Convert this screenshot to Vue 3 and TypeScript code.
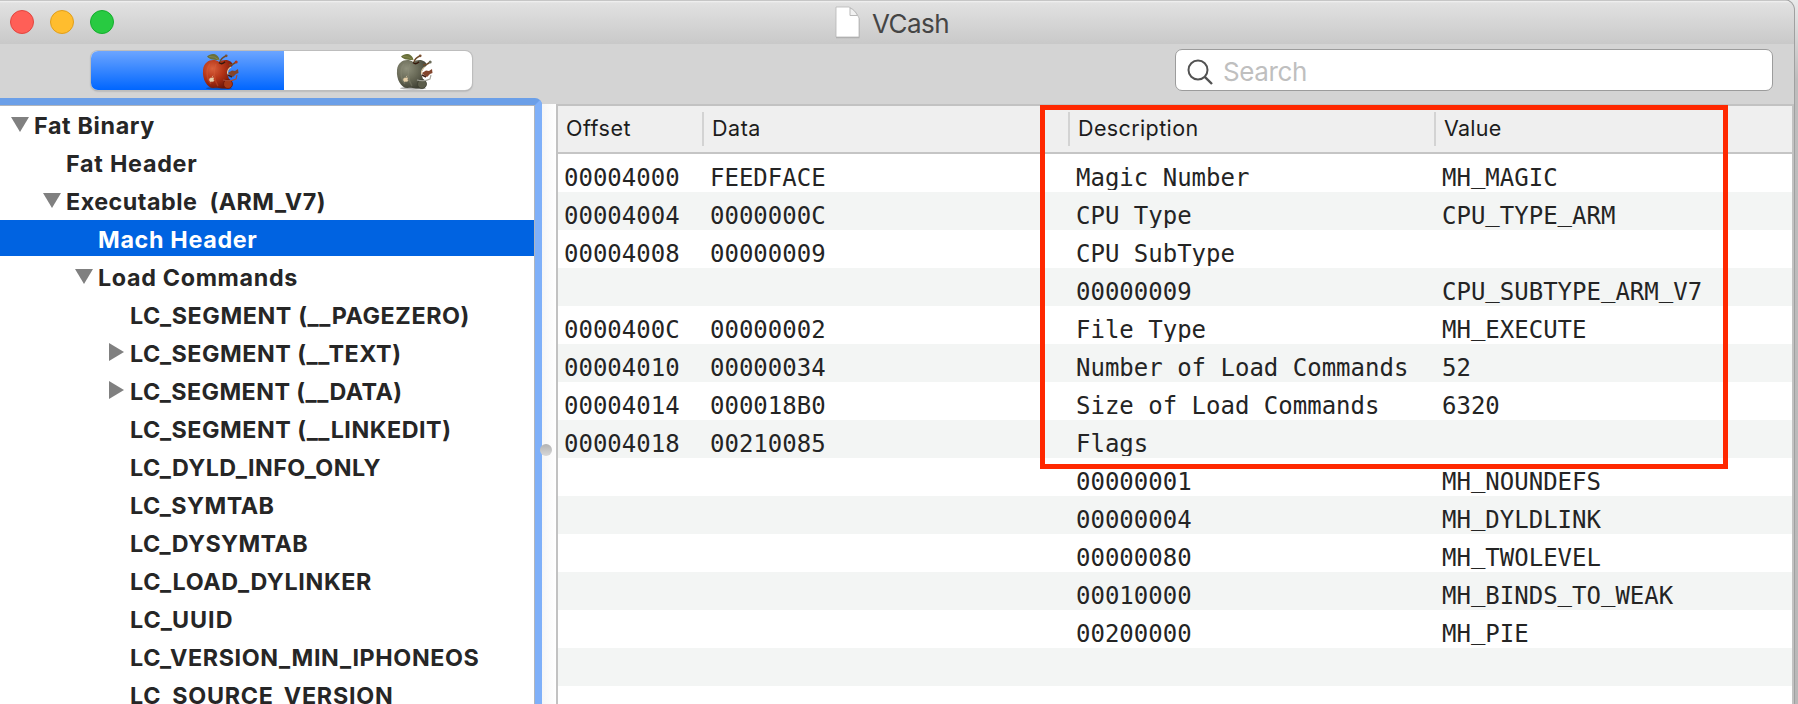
<script setup lang="ts">
interface TreeItem {
  label: string
  level: number
  width: number
  state?: 'open' | 'closed'
  selected?: boolean
}

const tree: TreeItem[] = [
  { label: 'Fat Binary', level: 0, width: 121, state: 'open' },
  { label: 'Fat Header', level: 1, width: 131.5 },
  { label: 'Executable  (ARM_V7)', level: 1, width: 260, state: 'open' },
  { label: 'Mach Header', level: 2, width: 159.5, selected: true },
  { label: 'Load Commands', level: 2, width: 200, state: 'open' },
  { label: 'LC_SEGMENT (__PAGEZERO)', level: 3, width: 340 },
  { label: 'LC_SEGMENT (__TEXT)', level: 3, width: 271.5, state: 'closed' },
  { label: 'LC_SEGMENT (__DATA)', level: 3, width: 272.5, state: 'closed' },
  { label: 'LC_SEGMENT (__LINKEDIT)', level: 3, width: 321.5 },
  { label: 'LC_DYLD_INFO_ONLY', level: 3, width: 251 },
  { label: 'LC_SYMTAB', level: 3, width: 144.5 },
  { label: 'LC_DYSYMTAB', level: 3, width: 178 },
  { label: 'LC_LOAD_DYLINKER', level: 3, width: 242 },
  { label: 'LC_UUID', level: 3, width: 103.5 },
  { label: 'LC_VERSION_MIN_IPHONEOS', level: 3, width: 349.5 },
  { label: 'LC_SOURCE_VERSION', level: 3, width: 263.5 },
]

const columns = [
  { name: 'Offset', width: 65 },
  { name: 'Data', width: 49 },
  { name: 'Description', width: 120.5 },
  { name: 'Value', width: 57.5 },
]

const rows: string[][] = [
  ['00004000', 'FEEDFACE', 'Magic Number', 'MH_MAGIC'],
  ['00004004', '0000000C', 'CPU Type', 'CPU_TYPE_ARM'],
  ['00004008', '00000009', 'CPU SubType', ''],
  ['', '', '00000009', 'CPU_SUBTYPE_ARM_V7'],
  ['0000400C', '00000002', 'File Type', 'MH_EXECUTE'],
  ['00004010', '00000034', 'Number of Load Commands', '52'],
  ['00004014', '000018B0', 'Size of Load Commands', '6320'],
  ['00004018', '00210085', 'Flags', ''],
  ['', '', '00000001', 'MH_NOUNDEFS'],
  ['', '', '00000004', 'MH_DYLDLINK'],
  ['', '', '00000080', 'MH_TWOLEVEL'],
  ['', '', '00010000', 'MH_BINDS_TO_WEAK'],
  ['', '', '00200000', 'MH_PIE'],
  ['', '', '', ''],
  ['', '', '', ''],
]

// Splits a constant's name so that its underscores can sit nearer the baseline.
const pieces = (cell: string) => cell.split(/(_)/)

const apples = [
  { id: 'red', light: '#d9603c', mid: '#b33417', dark: '#6e1608', core: '#a83a18' },
  { id: 'grey', light: '#8f907c', mid: '#6a6b58', dark: '#3f4034', core: '#5c5d4b' },
]

// Tracks a label in or out so that it spans the given width in pixels.
const vFit = {
  mounted(el: HTMLElement, binding: { value: number }) {
    const natural = el.getBoundingClientRect().width
    const count = (el.textContent ?? '').length
    el.style.letterSpacing = `${((binding.value - natural) / count).toFixed(3)}px`
  },
}
</script>

<template>
  <div class="desktop">
    <div class="window">
      <header class="titlebar">
        <div class="lights">
          <span class="light close"></span>
          <span class="light minimize"></span>
          <span class="light zoom"></span>
        </div>
        <div class="title">
          <svg class="doc" width="26" height="34" viewBox="0 0 26 34">
            <path d="M1 1.5H13.5L24.5 12V31.5H1Z" fill="#999" opacity=".6" transform="translate(0 .8)" />
            <path d="M1 1H14C18 3 22 7 24 12V31H1Z" fill="#fff" stroke="#b5b5b5" stroke-width=".8" />
            <path d="M15 2V9.5H22.5C21 6 18 3 15 2Z" fill="#f2f2f2" stroke="#b9b9b9" stroke-width="1" />
          </svg>
          <span v-fit="77">VCash</span>
        </div>
      </header>

      <div class="toolbar">
        <div class="segments">
          <div v-for="a in apples" :key="a.id" class="segment" :class="a.id">
            <svg width="38" height="38" viewBox="0 0 38 38">
              <defs>
                <radialGradient :id="'skin-' + a.id" cx=".32" cy=".3" r=".75">
                  <stop offset="0" :stop-color="a.light" />
                  <stop offset=".5" :stop-color="a.mid" />
                  <stop offset="1" :stop-color="a.dark" />
                </radialGradient>
              </defs>
              <ellipse cx="17" cy="35.2" rx="13" ry="1.5" fill="#222" opacity=".35" />
              <path d="M17 9C12 5 2 7 1 17C0 27 6 36 12 35C15 34.5 17 35.5 20 35.5C26 36 31 34 30 30C29 27 28 27 27 26L25 20L28 15L31 12C29 6 21 6 17 9Z" :fill="`url(#skin-${a.id})`" />
              <path d="M8 11C4 16 4 25 9 31M14 11C11 18 12 27 16 33" fill="none" :stroke="a.light" stroke-width="1.5" opacity=".35" />
              <path d="M17 9.5Q20 12 23 8.8" fill="none" stroke="#34180b" stroke-width="1.5" />
              <path d="M29 14Q25.500 16 25.500 20L28 23" fill="none" stroke="#e2cfaa" stroke-width="1.1" />
              <path d="M26 20L30 17.500L33 18L36 16L36.500 20L34 21L31 24L28 22Z" fill="#83452d" />
              <path d="M26 22L30 24" stroke="#402017" stroke-width="1.5" />
              <circle cx="26" cy="31" r="4.5" :fill="a.core" :stroke="a.dark" stroke-width=".8" />
              <path d="M21 27Q28 29 34 26L35 22" fill="none" :stroke="a.id === 'red' ? '#a74b37' : '#a6a69d'" stroke-width="1.1" />
              <path d="M18 9Q19 5 24 3M27 12Q31 12 34 9" fill="none" stroke="#6d4b2b" stroke-width="1.5" />
              <circle cx="24.2" cy="2.8" r="1.4" fill="#7b5132" />
              <circle cx="34.2" cy="9" r="1.5" :fill="a.mid" />
              <path d="M5 3.5C9 -.5 16 0 17.5 7C13 7 8 7 5 3.5Z" fill="#68703b" />
              <path d="M7 3.5Q13 3 17 7" fill="none" stroke="#8b8c50" stroke-width=".8" />
              <path d="M9.500 25C7.500 24.500 6.800 26.500 7.800 28C8.600 29.300 9 28.600 10 28.600C11 28.600 11.600 28.600 12 27.300C11 26.500 11.300 25.500 12 25.200C11 24.500 10.500 25 9.500 25ZM10 24.200L11 22.800Z" fill="#e6cfa8" stroke="#e6cfa8" stroke-width=".4" />
            </svg>
          </div>
        </div>
        <div class="search">
          <svg width="28" height="28" viewBox="0 0 28 28">
            <circle cx="11" cy="11" r="9.5" fill="none" stroke="#525252" stroke-width="2" />
            <path d="M17.8 17.8L25 25" stroke="#525252" stroke-width="2.4" />
          </svg>
          <span v-fit="84">Search</span>
        </div>
      </div>

      <main class="content">
        <nav class="sidebar">
          <div
            v-for="item in tree"
            :key="item.label"
            class="node"
            :class="['level-' + item.level, { selected: item.selected }]"
          >
            <span class="arrow">
              <svg v-if="item.state === 'open'" width="18" height="15" viewBox="0 0 18 15">
                <path d="M0 0H18L9 15Z" fill="#808080" />
              </svg>
              <svg v-else-if="item.state === 'closed'" class="closed" width="15" height="18" viewBox="0 0 15 18">
                <path d="M0 0L15 9L0 18Z" fill="#808080" />
              </svg>
            </span>
            <span v-fit="item.width" class="label">{{ item.label }}</span>
          </div>
        </nav>
        <div class="splitter"><span class="grip"></span></div>
        <section class="table">
          <div class="head">
            <div v-for="c in columns" :key="c.name" class="th"><span v-fit="c.width">{{ c.name }}</span></div>
          </div>
          <div v-for="(row, i) in rows" :key="i" class="row">
            <div v-for="(cell, j) in row" :key="j" class="cell"><span v-for="(piece, k) in pieces(cell)" :key="k" :class="{ low: piece === '_' }">{{ piece }}</span></div>
          </div>
        </section>
      </main>
    </div>
    <div class="highlight"></div>
  </div>
</template>

<style>
body {
  margin: 0;
  overflow: hidden;
}
</style>

<style scoped>
.desktop {
  position: relative;
  box-sizing: border-box;
  width: 1798px;
  height: 704px;
  padding-right: 4px;
  overflow: hidden;
  background: linear-gradient(#e9eaea, #bdbdbd 80px, #b8b8b8);
  font-family: Inter, "Liberation Sans", sans-serif;
}
.window {
  display: flex;
  flex-direction: column;
  width: 1794px;
  height: 704px;
  overflow: hidden;
  border-radius: 0 10px 0 0;
  background: #d4d4d4;
  box-shadow: 0 0 0 1px #a0a0a0;
}
.titlebar {
  flex: none;
  display: flex;
  box-sizing: border-box;
  height: 44px;
  border-top: 1px solid #c6c6c6;
  background: linear-gradient(#f2f2f2, #e1e1e1 2px, #c9c9c9);
}
.lights {
  display: flex;
  flex: none;
  box-sizing: border-box;
  width: 835px;
  gap: 16px;
  padding: 9px 0 0 10px;
}
.light {
  box-sizing: border-box;
  width: 24px;
  height: 24px;
  border-radius: 50%;
}
.close { background: #ff5f57; border: 1px solid #e2463f; }
.minimize { background: #ffbd2e; border: 1px solid #e09e1b; }
.zoom { background: #28ca41; border: 1px solid #14ae2d; }
.title {
  display: flex;
  padding-top: 5px;
  gap: 11px;
  color: #454545;
  font-size: 26px;
  line-height: 35px;
  white-space: nowrap;
}
.toolbar {
  flex: none;
  display: flex;
  justify-content: space-between;
  box-sizing: border-box;
  height: 60px;
  padding: 5px 21px 0 91px;
}
.segments {
  display: flex;
  width: 381px;
  height: 39px;
  margin-top: 2px;
  border-radius: 7px;
  overflow: hidden;
  background: #fff;
  box-shadow: 0 0 0 1px #bdbdbd, 0 1px 2px #888;
}
.segment { padding-top: 2px; box-sizing: border-box; }
.segment.red {
  width: 193px;
  padding-left: 111px;
  background: linear-gradient(#6ca5ff, #0066ff);
}
.segment.grey { padding-left: 112px; }
.search {
  display: flex;
  box-sizing: border-box;
  width: 598px;
  height: 42px;
  padding: 9px 0 0 11px;
  gap: 8px;
  border: 1px solid #9c9c9c;
  border-radius: 7px;
  background: #fff;
  color: #bfbfbf;
  font-size: 26px;
  line-height: 26px;
}
.content {
  flex: 1;
  display: flex;
  min-height: 0;
}
.sidebar {
  flex: none;
  box-sizing: border-box;
  width: 542px;
  height: 608px;
  margin-top: -6px;
  border-top: 7px solid #6b9fe8;
  border-right: 7px solid #7fb0f9;
  border-top-right-radius: 7px;
  background: #fff;
  box-shadow: inset -1px 1px #b0b5bd;
  overflow: hidden;
  padding-top: 1px;
}
.node {
  display: flex;
  height: 36px;
  margin: 0 1px 2px 0;
  color: #262626;
  font-size: 23.3px;
  font-weight: 700;
  line-height: 36px;
  white-space: pre;
}
.selected { background: #0063e1; color: #fff; }
.level-0 { padding-left: 11px; }
.level-1 { padding-left: 43px; }
.level-2 { padding-left: 75px; }
.level-3 { padding-left: 107px; }
.arrow { flex: none; display: flex; width: 23px; padding-top: 11px; }
.closed { margin: -2px 0 0 2px; }
.label { position: relative; top: 2px; }
.splitter {
  position: relative;
  flex: none;
  width: 14px;
  background: linear-gradient(90deg, #f6f6f6, #fff);
}
.grip {
  position: absolute;
  left: -2px;
  top: 340px;
  width: 12px;
  height: 12px;
  border-radius: 50%;
  background: linear-gradient(#b2b2b2, #d8d8d8);
}
.table {
  flex: 1;
  border: 2px solid #c2c2c2;
  border-bottom: 0;
  background: #fff;
  overflow: hidden;
}
.head,
.row {
  display: grid;
  grid-template-columns: 146px 366px 366px 1fr;
}
.head {
  box-sizing: border-box;
  height: 48px;
  border-bottom: 2px solid #c5c5c5;
  background: #efefef;
  color: #1c1c1c;
  font-size: 21.5px;
}
.th {
  height: 34px;
  margin-top: 6px;
  padding-left: 8px;
  border-right: 2px solid #d3d3d3;
  line-height: 33px;
}
.th:last-child { border-right: 0; }
.row { height: 38px; }
.row:nth-child(odd) { background: #f3f5f4; }
.cell {
  height: 36px;
  padding-left: 6px;
  overflow: hidden;
  color: #242424;
  font-family: "DejaVu Sans Mono", monospace;
  font-size: 24px;
  line-height: 49px;
  white-space: nowrap;
}
.low { position: relative; top: -3px; }
.highlight {
  position: absolute;
  left: 1040px;
  top: 105px;
  box-sizing: border-box;
  width: 688px;
  height: 364px;
  border: 5px solid #ff2800;
}
</style>
